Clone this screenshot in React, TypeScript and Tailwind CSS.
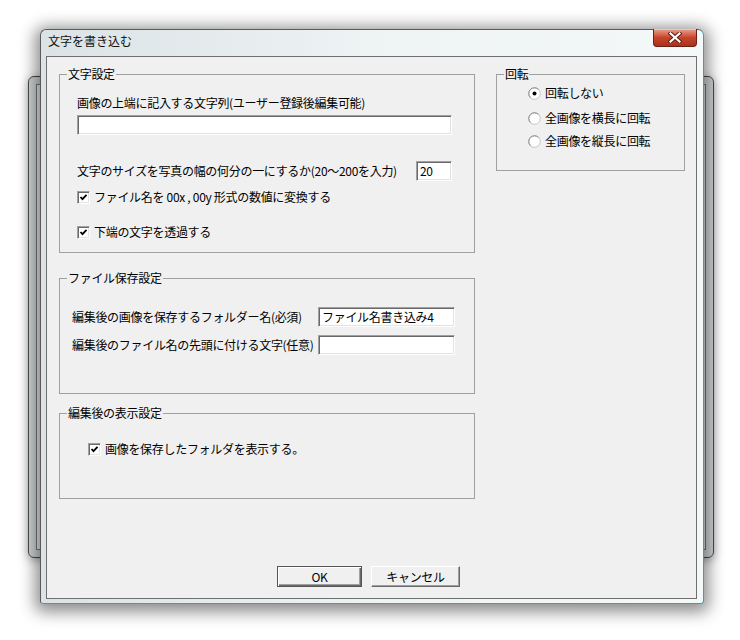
import type { ReactNode } from 'react'

const sunken =
  'bg-white border border-t-[#a0a0a0] border-l-[#a0a0a0] border-r-white border-b-white shadow-[inset_1px_1px_0_#696969,inset_-1px_-1px_0_#e3e3e3]'

function GroupBox({ title, className, children }: { title: string; className: string; children: ReactNode }) {
  return (
    <div className={'relative border border-[#a0a0a0] ' + className}>
      <span className="absolute left-[7px] -top-[9px] px-[1px] leading-[16px] bg-[#f0f0f0] whitespace-nowrap">{title}</span>
      {children}
    </div>
  )
}

function TextBox({ value, className }: { value?: string; className: string }) {
  return (
    <div className={sunken + ' h-[20px] flex items-center pl-[3px] leading-[16px] whitespace-nowrap overflow-hidden ' + className}>
      {value}
    </div>
  )
}

function Check({ label, className = '' }: { label: string; className?: string }) {
  return (
    <div className={'flex items-center h-[16px] gap-[4px] ' + className}>
      <span className={sunken + ' w-[13px] h-[13px] flex items-center justify-center shrink-0'}>
        <svg width="9" height="9" viewBox="0 0 9 9">
          <path d="M1.5 4 L3.5 6.2 L7.5 1.8" fill="none" stroke="#000" strokeWidth="1.8" />
        </svg>
      </span>
      <span className="leading-[16px] whitespace-pre">{label}</span>
    </div>
  )
}

function Radio({ label, checked = false, className = '' }: { label: string; checked?: boolean; className?: string }) {
  return (
    <div className={'flex items-center h-[16px] gap-[4px] ' + className}>
      <svg width="13" height="13" viewBox="0 0 13 13" className="shrink-0">
        <circle cx="6.5" cy="6.5" r="5.8" fill="#fff" stroke="#c4c4c4" strokeWidth="1" />
        <path d="M2.4 10.6 A5.8 5.8 0 0 1 10.6 2.4" fill="none" stroke="#8a8a8a" strokeWidth="1" />
        {checked && <circle cx="6.5" cy="6.5" r="2" fill="#000" />}
      </svg>
      <span className="leading-[16px] whitespace-nowrap">{label}</span>
    </div>
  )
}

function Button({ label, primary = false, className }: { label: string; primary?: boolean; className: string }) {
  const frame = primary
    ? 'border border-[#555] shadow-[inset_1px_1px_0_#fff,inset_-1px_-1px_0_#696969,inset_-2px_-2px_0_#a0a0a0]'
    : 'border border-t-white border-l-white border-r-[#696969] border-b-[#696969] shadow-[inset_-1px_-1px_0_#a0a0a0]'
  return (
    <div className={'h-[21px] bg-[#f0f0f0] flex items-center justify-center leading-[16px] ' + frame + ' ' + className}>
      {label}
    </div>
  )
}

export default function App() {
  return (
    <div className="relative w-[740px] h-[640px] overflow-hidden bg-white text-[12px] tracking-[-0.3px] text-black font-['Noto_Sans_CJK_JP',sans-serif]">
      {/* window behind */}
      <div className="absolute left-[28px] top-[76px] w-[686px] h-[482px] rounded-[6px] border border-[#4a4a4a] bg-gradient-to-r from-[#cfd5d7] via-[#e6eaeb] to-[#d3d8da] shadow-[0_2px_10px_rgba(0,0,0,0.35)] p-[7px]">
        <div className="w-full h-full border border-[#7a7a7a] bg-[#eeeeee]" />
      </div>

      {/* dialog */}
      <div className="absolute left-[40px] top-[29px] w-[664px] h-[575px] flex flex-col pl-[5px] pr-[6px] pb-[4px] rounded-t-[6px] rounded-b-[3px] border border-t-[#5a5a5a] border-l-[#5a5a5a] border-r-[#2aa0d4] border-b-[#2aa0d4] bg-gradient-to-r from-[#dbe3e6] via-[#eef3f4] to-[#f4f8f9] shadow-[0_3px_16px_5px_rgba(0,0,0,0.45)]">
        <div className="h-[26px] flex items-start shrink-0">
          <span className="pl-[2px] pt-[3px] leading-[16px] tracking-normal text-[#111]">文字を書き込む</span>
          <div className="ml-auto -mt-[1px] w-[44px] h-[18px] rounded-b-[4px] border border-[#6b1f14] border-t-0 bg-gradient-to-b from-[#e8a08e] via-[#c8442c] to-[#a9311c] flex items-center justify-center shadow-[inset_0_1px_0_rgba(255,255,255,0.4)]">
            <svg width="14" height="11" viewBox="0 0 14 11">
              <path d="M2.5 1.5 L11.5 9.5 M11.5 1.5 L2.5 9.5" stroke="#5a1a10" strokeWidth="4" strokeLinecap="square" />
              <path d="M2.5 1.5 L11.5 9.5 M11.5 1.5 L2.5 9.5" stroke="#fff" strokeWidth="2.2" strokeLinecap="square" />
            </svg>
          </div>
        </div>

        <div className="h-[543px] border border-[#6f6f6f] bg-[#f0f0f0] flex flex-col">
          <div className="flex pt-[17px] pl-[12px]">
            <div className="w-[416px] flex flex-col">
              <GroupBox title="文字設定" className="h-[179px] pt-[20px] pl-[17px]">
                <div className="leading-[16px] whitespace-nowrap">画像の上端に記入する文字列(ユーザー登録後編集可能)</div>
                <TextBox className="mt-[4px] w-[375px]" />
                <div className="mt-[26px] w-[375px] flex items-center justify-between">
                  <span className="leading-[16px] whitespace-nowrap">文字のサイズを写真の幅の何分の一にするか(20～200を入力)</span>
                  <TextBox value="20" className="w-[36px]" />
                </div>
                <Check className="mt-[8px]" label="ファイル名を 00x , 00y 形式の数値に変換する" />
                <Check className="mt-[19px]" label="下端の文字を透過する" />
              </GroupBox>

              <GroupBox title="ファイル保存設定" className="mt-[25px] h-[116px] pt-[28px] pl-[12px]">
                <div className="flex items-center">
                  <span className="w-[246px] leading-[16px] whitespace-nowrap">編集後の画像を保存するフォルダー名(必須)</span>
                  <TextBox value="ファイル名書き込み4" className="w-[137px]" />
                </div>
                <div className="mt-[8px] flex items-center">
                  <span className="w-[246px] leading-[16px] whitespace-nowrap">編集後のファイル名の先頭に付ける文字(任意)</span>
                  <TextBox className="w-[137px]" />
                </div>
              </GroupBox>

              <GroupBox title="編集後の表示設定" className="mt-[19px] h-[86px] pt-[27px] pl-[28px]">
                <Check label="画像を保存したフォルダを表示する。" />
              </GroupBox>
            </div>

            <GroupBox title="回転" className="ml-[21px] w-[189px] h-[97px] pt-[10px] pl-[31px]">
              <Radio label="回転しない" checked />
              <Radio className="mt-[9px]" label="全画像を横長に回転" />
              <Radio className="mt-[7px]" label="全画像を縦長に回転" />
            </GroupBox>
          </div>

          <div className="mt-[67px] pl-[230px] flex gap-[9px]">
            <Button label="OK" primary className="w-[85px]" />
            <Button label="キャンセル" className="w-[89px]" />
          </div>
        </div>
      </div>
    </div>
  )
}
